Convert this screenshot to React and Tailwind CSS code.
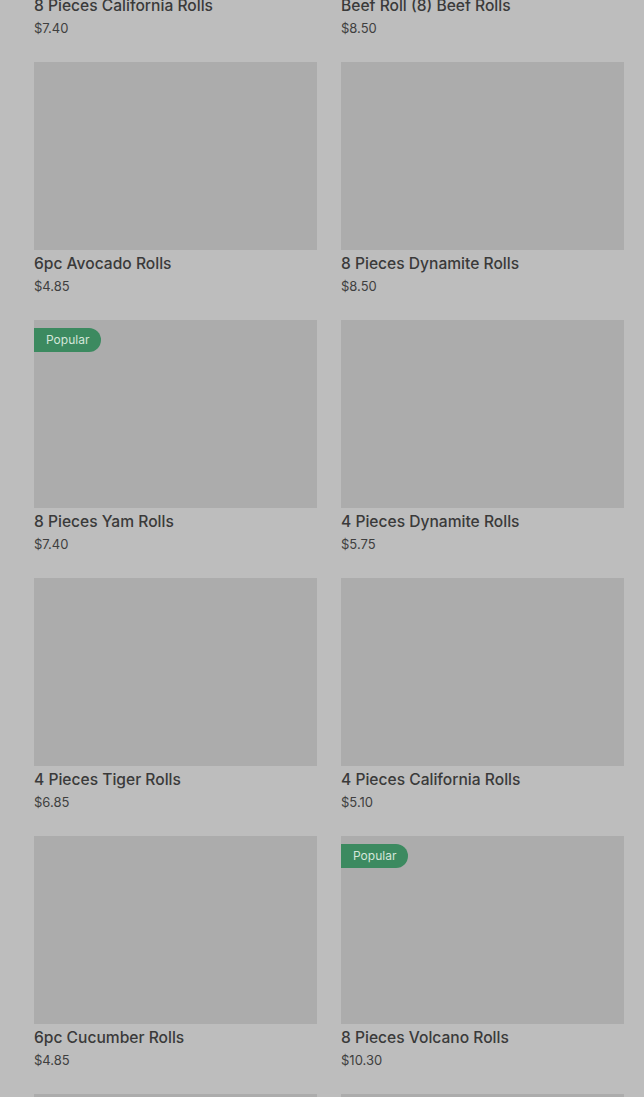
const items = [
  { name: '8 Pieces California Rolls', price: '$7.40' },
  { name: 'Beef Roll (8) Beef Rolls', price: '$8.50' },
  { name: '6pc Avocado Rolls', price: '$4.85' },
  { name: '8 Pieces Dynamite Rolls', price: '$8.50' },
  { name: '8 Pieces Yam Rolls', price: '$7.40', popular: true },
  { name: '4 Pieces Dynamite Rolls', price: '$5.75' },
  { name: '4 Pieces Tiger Rolls', price: '$6.85' },
  { name: '4 Pieces California Rolls', price: '$5.10' },
  { name: '6pc Cucumber Rolls', price: '$4.85' },
  { name: '8 Pieces Volcano Rolls', price: '$10.30', popular: true },
  { name: 'Salmon Rolls', price: '$6.50' },
  { name: 'Tuna Rolls', price: '$6.50' },
];

function Card({ item }) {
  return (
    <div className="flex flex-col">
      <div className="relative h-[188px] bg-[#acacac]">
        {item.popular && (
          <span className="absolute left-0 top-[8px] h-[24px] pl-[12px] pr-[12px] flex items-center rounded-r-full bg-[#3c8a60] text-[12px] text-[#d4e6da]">
            Popular
          </span>
        )}
      </div>
      <div className="h-[24px] mt-[2px] flex items-center text-[15.6px] font-medium text-[#3a3a3a] leading-[24px]">
        {item.name}
      </div>
      <div className="h-[20px] pt-[1px] flex items-center text-[13px] text-[#3f3f3f]">
        {item.price}
      </div>
    </div>
  );
}

export default function App() {
  return (
    <div className="h-[1097px] overflow-hidden bg-[#bdbdbd]" style={{ fontFamily: 'Inter, "Noto Sans", sans-serif' }}>
      <div className="mt-[-196px] pl-[34px] pr-[20px] grid grid-cols-2 gap-x-[24px] gap-y-[24px]">
        {items.map((item, i) => (
          <Card key={i} item={item} />
        ))}
      </div>
    </div>
  );
}
